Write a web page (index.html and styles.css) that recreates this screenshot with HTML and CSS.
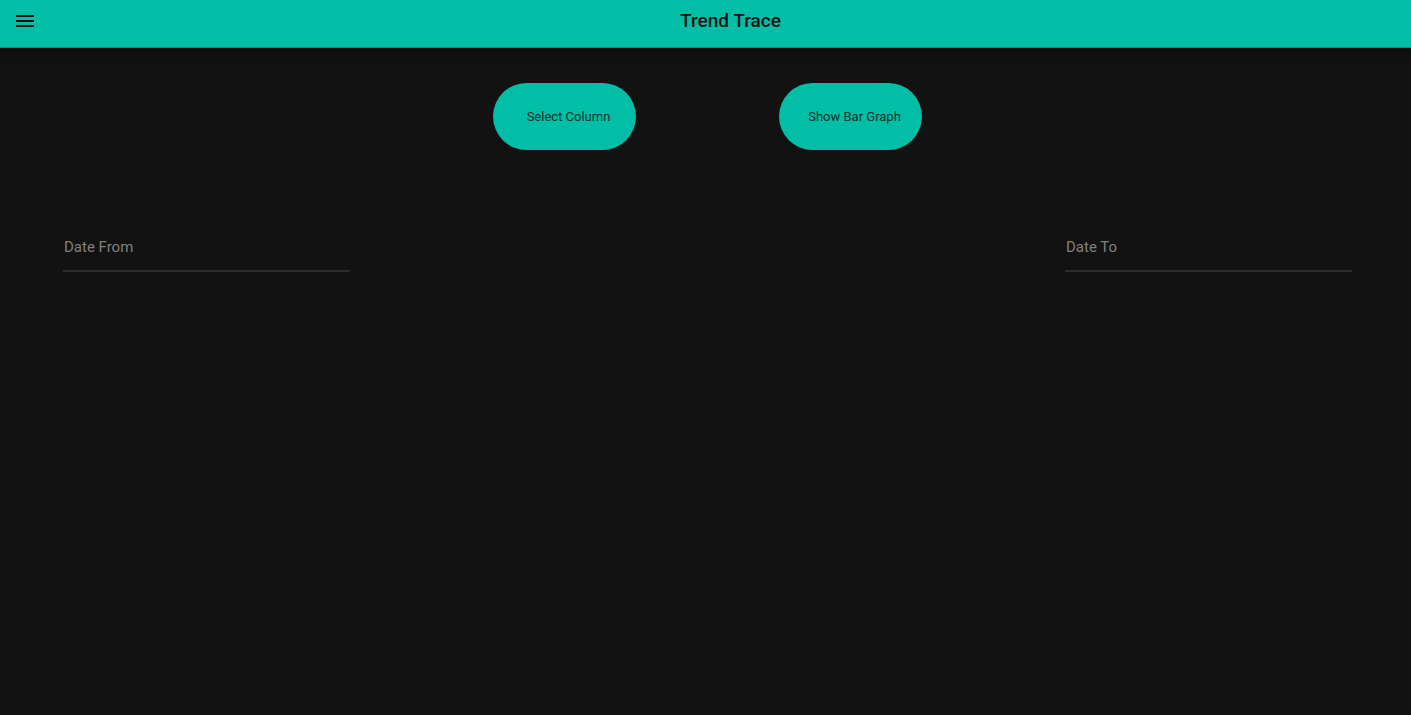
FILE: index.html
```html
<!DOCTYPE html>
<html>
<head>
<meta charset="utf-8">
<title>Trend Trace</title>
<link rel="stylesheet" href="styles.css">
</head>
<body>
<header class="appbar">
  <button class="menu-btn" aria-label="menu">
    <svg width="18" height="12" viewBox="0 0 18 12"><rect x="0" y="0" width="18" height="2" fill="#111"/><rect x="0" y="5" width="18" height="2" fill="#111"/><rect x="0" y="10" width="18" height="2" fill="#111"/></svg>
  </button>
  <h1 class="title">Trend Trace</h1>
</header>
<main class="content">
  <div class="actions">
    <button class="pill">Select Column</button>
    <button class="pill">Show Bar Graph</button>
  </div>
  <div class="dates">
    <div class="field">Date From</div>
    <div class="field">Date To</div>
  </div>
</main>
</body>
</html>
```
FILE: styles.css
```css
html, body {
  margin: 0;
  padding: 0;
  height: 100%;
  background: #121212;
  font-family: Roboto, "Liberation Sans", sans-serif;
}
.appbar {
  position: relative;
  height: 47px;
  background: #02bea6;
  border-bottom: 1px solid #029783;
  box-shadow: 0 2px 10px rgba(0,0,0,0.6);
  display: flex;
  align-items: center;
  justify-content: center;
}
.menu-btn {
  position: absolute;
  left: 16px;
  top: 15px;
  padding: 0;
  border: 0;
  background: none;
  width: 18px;
  height: 12px;
  display: block;
}
.menu-btn svg { display: block; }
.title {
  margin: 0 0 6px 50px;
  font-size: 19px;
  font-weight: 500;
  color: #121212;
}
.content {
  padding-top: 35px;
}
.actions {
  display: flex;
  justify-content: center;
  gap: 143px;
  padding-left: 4px;
}
.pill {
  width: 143px;
  height: 67px;
  border: 0;
  border-radius: 34px;
  background: #02bea6;
  color: #10302a;
  font-family: Roboto, "Liberation Sans", sans-serif;
  font-size: 13px;
  font-weight: 400;
  padding: 0 0 0 8px;
}
.dates {
  display: flex;
  justify-content: space-between;
  padding: 80px 59px 0 63px;
}
.field {
  width: 287px;
  color: #808080;
  font-size: 15px;
  padding: 8px 0 14px 1px;
  border-bottom: 2px solid #2c2c2c;
  box-sizing: border-box;
}
```
